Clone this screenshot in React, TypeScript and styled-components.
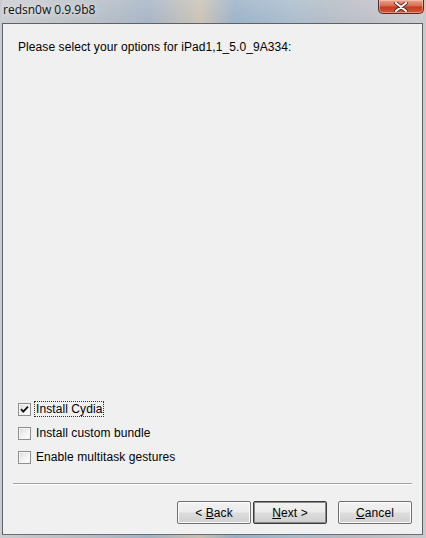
import React, { useState } from "react";
import styled, { createGlobalStyle } from "styled-components";

const GlobalStyle = createGlobalStyle`
    html, body {
        margin: 0;
        padding: 0;
        background: #d9dde2;
    }
    * {
        box-sizing: border-box;
    }
`;

type TOption = {
    id: string
    label: string
}

const options: TOption[] = [
    { id: "cydia", label: "Install Cydia" },
    { id: "bundle", label: "Install custom bundle" },
    { id: "multitask", label: "Enable multitask gestures" }
];

const App = () => {

    const [checked, setChecked] = useState<Record<string, boolean>>({
        cydia: true,
        bundle: false,
        multitask: false
    });

    const toggle = (id: string) => setChecked({ ...checked, [id]: !checked[id] });

    return (
        <>
            <GlobalStyle />
            <Window>
                <TitleBar>
                    <Title>redsn0w 0.9.9b8</Title>
                    <CloseButton>
                        <svg width="14" height="10" viewBox="0 0 14 10">
                            <path d="M2 1 L12 9 M12 1 L2 9" stroke="#5a1a10" strokeWidth="3.6" strokeLinecap="round" />
                            <path d="M2 1 L12 9 M12 1 L2 9" stroke="#ffffff" strokeWidth="2.2" strokeLinecap="round" />
                        </svg>
                    </CloseButton>
                </TitleBar>
                <Client>
                    <Heading>Please select your options for iPad1,1_5.0_9A334:</Heading>
                    <Spacer />
                    <OptionList>
                        {options.map(({ id, label }, i) => (
                            <OptionRow key={id} onClick={() => toggle(id)}>
                                <CheckBox>
                                    {checked[id] && (
                                        <svg width="9" height="9" viewBox="0 0 9 9">
                                            <path d="M1 4.2 L3.3 6.6 L8 1.6" fill="none" stroke="#111" strokeWidth="1.8" />
                                        </svg>
                                    )}
                                </CheckBox>
                                <OptionLabel focused={i === 0}>{label}</OptionLabel>
                            </OptionRow>
                        ))}
                    </OptionList>
                    <Separator />
                    <ButtonRow>
                        <NavGroup>
                            <DialogButton>&lt; <u>B</u>ack</DialogButton>
                            <DialogButton isDefault><u>N</u>ext &gt;</DialogButton>
                        </NavGroup>
                        <DialogButton><u>C</u>ancel</DialogButton>
                    </ButtonRow>
                </Client>
            </Window>
        </>
    );
}

export default App;

const Window = styled.div`
    width: 426px;
    height: 538px;
    display: flex;
    flex-direction: column;
    padding: 0 3px 3px 2px;
    background: linear-gradient(90deg, #c9ccd0 0%, #b7bdc4 20%, #a3b2c4 35%, #c9c0b2 47%, #98afc6 55%, #a6bacb 68%, #b2bac3 78%, #bcbcc6 86%, #c9cacd 100%);
    font-family: "Liberation Sans", Arial, sans-serif;
    font-size: 12px;
    color: #000;
`;

const TitleBar = styled.div`
    height: 23px;
    display: flex;
    align-items: flex-start;
    justify-content: space-between;
    padding-left: 1px;
    background: linear-gradient(180deg, rgba(255,255,255,0.18) 0%, rgba(255,255,255,0.05) 100%);
`;

const Title = styled.span`
    font-family: "Open Sans", "Liberation Sans", sans-serif;
    font-size: 12px;
    line-height: 20px;
    color: #111;
    text-shadow: 0 0 6px rgba(255,255,255,0.8);
`;

const CloseButton = styled.div`
    width: 46px;
    height: 14px;
    margin-right: -1px;
    display: flex;
    align-items: center;
    justify-content: center;
    border: 1px solid #5b2a22;
    border-top: none;
    border-radius: 0 0 5px 5px;
    background: linear-gradient(180deg, #e8a590 0%, #d86a50 45%, #c43b20 55%, #d25a3a 100%);
    box-shadow: inset 0 0 0 1px rgba(255,220,200,0.45);
`;

const Client = styled.div`
    flex: 1;
    display: flex;
    flex-direction: column;
    background: #f0f0f0;
    border: 1px solid #5e6266;
    border-bottom-color: #6b6e72;
    padding: 16px 10px 10px 15px;
    letter-spacing: 0.08px;
`;

const Heading = styled.div`
    line-height: 14px;
`;

const Spacer = styled.div`
    flex: 1;
`;

const OptionList = styled.div`
    display: flex;
    flex-direction: column;
    row-gap: 10px;
    margin-bottom: 19px;
`;

const OptionRow = styled.label`
    display: flex;
    align-items: center;
    column-gap: 4px;
    height: 14px;
    cursor: default;
`;

const CheckBox = styled.span`
    width: 13px;
    height: 13px;
    display: flex;
    align-items: center;
    justify-content: center;
    border: 1px solid #8e8f8f;
    background: linear-gradient(135deg, #dcdcdc 0%, #f4f4f4 60%, #ffffff 100%);
    box-shadow: inset 0 0 0 1px #f6f6f6;
`;

const OptionLabel = styled.span<{ focused?: boolean }>`
    padding: 0 1px;
    line-height: 14px;
    outline: ${({ focused }) => (focused ? "1px dotted #333" : "none")};
`;

const Separator = styled.div`
    height: 2px;
    margin: 0 0 0 -5px;
    border-top: 1px solid #a0a0a0;
    border-bottom: 1px solid #ffffff;
`;

const ButtonRow = styled.div`
    display: flex;
    justify-content: flex-end;
    column-gap: 11px;
    margin-top: 16px;
`;

const NavGroup = styled.div`
    display: flex;
    column-gap: 2px;
`;

const DialogButton = styled.button<{ isDefault?: boolean }>`
    width: 74px;
    height: 23px;
    padding: 0;
    font-family: "Liberation Sans", Arial, sans-serif;
    font-size: 12px;
    letter-spacing: 0.08px;
    color: #000;
    border: 1px solid ${({ isDefault }) => (isDefault ? "#3c3c3c" : "#707070")};
    border-radius: 2px;
    background: linear-gradient(180deg, #f2f2f2 0%, #ebebeb 48%, #dddddd 52%, #cfcfcf 100%);
    box-shadow: ${({ isDefault }) => (isDefault ? "inset 0 0 0 1px #8a8a8a" : "inset 0 0 0 1px #fcfcfc")};

    u {
        text-underline-offset: 1px;
    }
`;
